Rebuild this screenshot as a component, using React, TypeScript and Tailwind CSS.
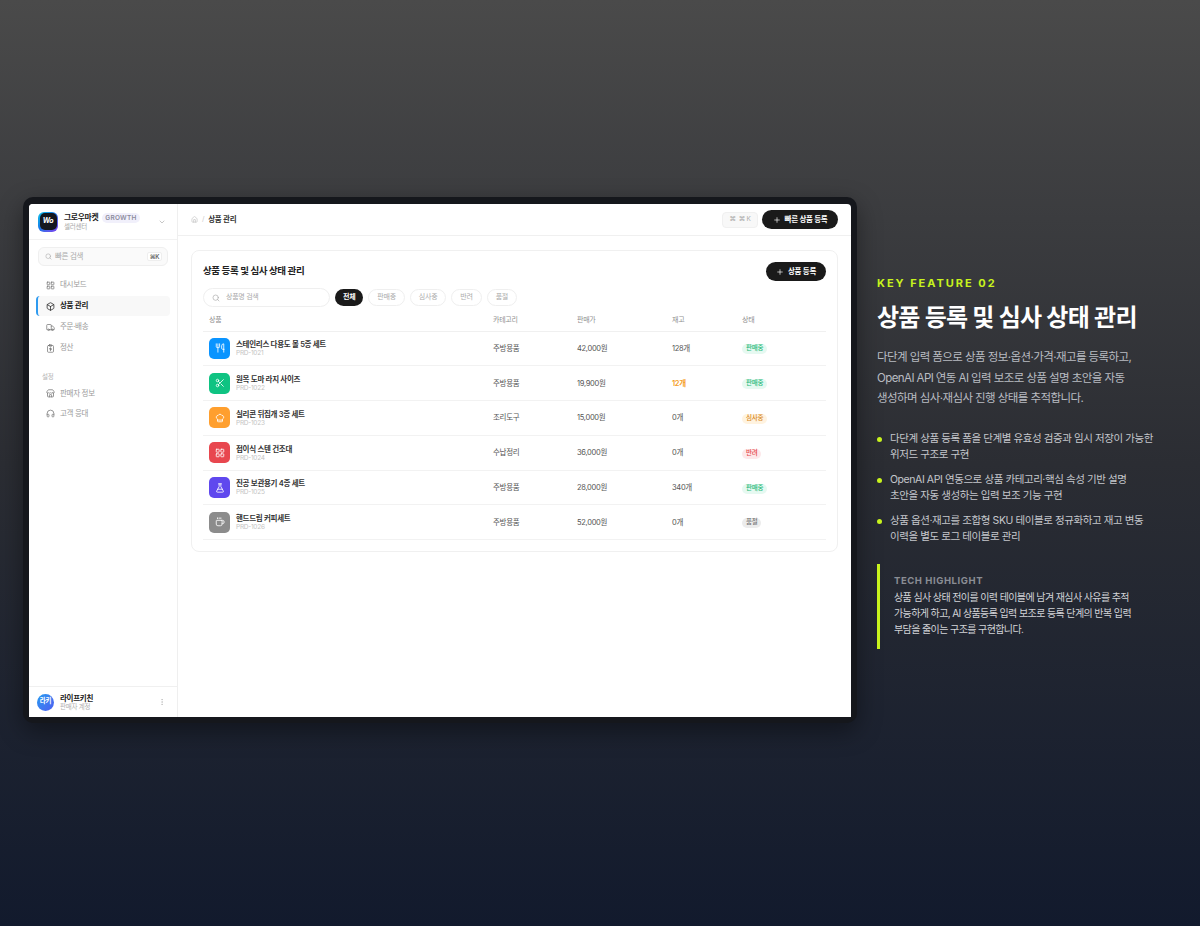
import { Box, ChefHat, ChevronDown, Coffee, FlaskConical, Headphones, House, LayoutGrid, MoreVertical, Plus, Scissors, Search, Store, Truck, Utensils } from "lucide-react";
import type { ComponentType } from "react";

type Icon = ComponentType<{ className?: string; strokeWidth?: number }>;

// 정산 icon: clipboard with a won mark, lucide has nothing close
function SettleIcon({ className }: { className?: string }) {
  return (
    <svg viewBox="0 0 24 24" fill="none" stroke="currentColor" strokeWidth={2} strokeLinecap="round" strokeLinejoin="round" className={className}>
      <rect x="4" y="4" width="16" height="18" rx="2.5" />
      <rect x="8.5" y="2" width="7" height="4" rx="1" />
      <path d="M12 10v8M9.5 12h4a1.5 1.5 0 0 1 0 3h-3" />
    </svg>
  );
}

const navMain: { label: string; icon: Icon; active?: boolean }[] = [
  { label: "대시보드", icon: LayoutGrid },
  { label: "상품 관리", icon: Box, active: true },
  { label: "주문·배송", icon: Truck },
  { label: "정산", icon: SettleIcon },
];

const navSub: { label: string; icon: Icon }[] = [
  { label: "판매자 정보", icon: Store },
  { label: "고객 응대", icon: Headphones },
];

const filters = ["전체", "판매중", "심사중", "반려", "품절"];

const statusStyle: Record<string, string> = {
  판매중: "bg-[#e6f9f1] text-[#1fb97a]",
  심사중: "bg-[#fff3e0] text-[#d98a1f]",
  반려: "bg-[#fde8ea] text-[#e5484d]",
  품절: "bg-[#ececec] text-[#777777]",
};

const rows: { name: string; code: string; cat: string; price: string; stock: string; low?: boolean; status: string; icon: Icon; color: string }[] = [
  { name: "스테인리스 다용도 볼 5종 세트", code: "PRD-1021", cat: "주방용품", price: "42,000원", stock: "128개", status: "판매중", icon: Utensils, color: "bg-[#0a94ff]" },
  { name: "원목 도마 라지 사이즈", code: "PRD-1022", cat: "주방용품", price: "19,900원", stock: "12개", low: true, status: "판매중", icon: Scissors, color: "bg-[#0fc382]" },
  { name: "실리콘 뒤집개 3종 세트", code: "PRD-1023", cat: "조리도구", price: "15,000원", stock: "0개", status: "심사중", icon: ChefHat, color: "bg-[#ff9f2e]" },
  { name: "접이식 스텐 건조대", code: "PRD-1024", cat: "수납정리", price: "36,000원", stock: "0개", status: "반려", icon: LayoutGrid, color: "bg-[#e8474f]" },
  { name: "진공 보관용기 4종 세트", code: "PRD-1025", cat: "주방용품", price: "28,000원", stock: "340개", status: "판매중", icon: FlaskConical, color: "bg-[#5f48ee]" },
  { name: "핸드드립 커피세트", code: "PRD-1026", cat: "주방용품", price: "52,000원", stock: "0개", status: "품절", icon: Coffee, color: "bg-[#8c8c8c]" },
];

const bullets = [
  ["다단계 상품 등록 폼을 단계별 유효성 검증과 임시 저장이 가능한", "위저드 구조로 구현"],
  ["OpenAI API 연동으로 상품 카테고리·핵심 속성 기반 설명", "초안을 자동 생성하는 입력 보조 기능 구현"],
  ["상품 옵션·재고를 조합형 SKU 테이블로 정규화하고 재고 변동", "이력을 별도 로그 테이블로 관리"],
];

function Sidebar() {
  return (
    <aside className="w-[149px] shrink-0 flex flex-col border-r border-[#efefef] bg-white">
      <div className="h-[36px] flex items-center pl-[9px] pr-[11px] border-b border-[#f2f2f2]">
        <div className="w-[20px] h-[20px] rounded-[6px] bg-gradient-to-br from-[#19c3e6] via-[#1d6fe8] to-[#7a3cf0] p-[1.5px] shrink-0">
          <div className="w-full h-full rounded-[5px] bg-[#14171f] flex items-center justify-center text-white text-[7px] font-bold italic">Wo</div>
        </div>
        <div className="ml-[6px] leading-none pt-[1px]">
          <div className="flex items-center gap-[4px]">
            <span className="text-[7.8px] font-bold text-[#222222]">그로우마켓</span>
            <span className="px-[3px] h-[10px] flex items-center rounded-full bg-[#f1f0fb] text-[#8b8b9c] text-[6.5px] font-semibold !tracking-[0.04em]">GROWTH</span>
          </div>
          <div className="text-[6.5px] text-[#a8a8a8] mt-[1px]">셀러센터</div>
        </div>
        <ChevronDown className="w-[8px] h-[8px] ml-auto text-[#aaaaaa]" />
      </div>
      <div className="px-[9px] pt-[7px]">
        <div className="h-[19px] rounded-[6px] bg-[#fafafa] border border-[#efefef] flex items-center pl-[6px] pr-[5px] text-[#aaaaaa]">
          <Search className="w-[7px] h-[7px]" />
          <span className="ml-[3px] text-[7.5px]">빠른 검색</span>
          <span className="ml-auto w-[15px] h-[9px] flex items-center justify-center rounded-[2px] bg-white border border-[#eeeeee] text-[6px] font-semibold text-[#666666]">⌘K</span>
        </div>
      </div>
      <nav className="px-[7px] pt-[9px] flex flex-col gap-[1px]">
        {navMain.map((n) => (
          <div key={n.label} className={`h-[20px] flex items-center pl-[8px] rounded-[4px] border-l-2 ${n.active ? "border-[#2f9bf0] bg-[#f8f8f8] text-[#222222] font-semibold" : "border-transparent text-[#9a9a9a]"}`}>
            <n.icon className={`w-[9px] h-[9px] ${n.active ? "text-[#222222]" : "text-[#777777]"}`} />
            <span className="ml-[5px] text-[7.5px]">{n.label}</span>
          </div>
        ))}
      </nav>
      <div className="pl-[13px] pt-[15px] text-[6.5px] text-[#b5b5b5]">설정</div>
      <nav className="px-[7px] pt-[1px] flex flex-col">
        {navSub.map((n) => (
          <div key={n.label} className="h-[20px] flex items-center pl-[10px] text-[#9a9a9a]">
            <n.icon className="w-[9px] h-[9px] text-[#777777]" />
            <span className="ml-[5px] text-[7.5px]">{n.label}</span>
          </div>
        ))}
      </nav>
      <div className="mt-auto h-[31px] flex items-center pl-[8px] pr-[11px] border-t border-[#f0f0f0]">
        <div className="w-[17px] h-[17px] rounded-full bg-gradient-to-br from-[#1f9af0] to-[#4a5cf0] flex items-center justify-center text-white text-[6.5px] font-bold">라키</div>
        <div className="ml-[6px] leading-none pt-[1px]">
          <div className="text-[7.5px] font-bold text-[#222222]">라이프키친</div>
          <div className="text-[6.5px] text-[#b0b0b0] mt-[1px]">판매자 계정</div>
        </div>
        <MoreVertical className="w-[8px] h-[8px] ml-auto text-[#bbbbbb]" />
      </div>
    </aside>
  );
}

function ProductCard() {
  return (
    <section className="mx-[13px] mt-[14px] border border-[#f0f0f0] rounded-[8px] px-[11px] pt-[11px] pb-[11px]">
      <div className="flex items-center justify-between h-[19px]">
        <h2 className="text-[9.5px] font-bold text-[#222222]">상품 등록 및 심사 상태 관리</h2>
        <button className="h-[19px] w-[60px] rounded-full bg-[#1a1a1a] text-white text-[7.5px] font-semibold flex items-center justify-center gap-[4px]">
          <Plus className="w-[8px] h-[8px]" />상품 등록
        </button>
      </div>
      <div className="flex items-center mt-[7px] h-[19px]">
        <div className="w-[127px] h-[19px] border border-[#efefef] rounded-full flex items-center pl-[8px] text-[#aaaaaa]">
          <Search className="w-[8px] h-[8px]" />
          <span className="ml-[6px] text-[7px]">상품명 검색</span>
        </div>
        <div className="flex ml-[5px] gap-[5px]">
          {filters.map((f, i) => (
            <span key={f} className={`h-[17px] px-[8px] rounded-full flex items-center text-[7px] ${i === 0 ? "bg-[#1a1a1a] text-white font-semibold" : "border border-[#efefef] text-[#aaaaaa]"}`}>{f}</span>
          ))}
        </div>
      </div>
      <table className="w-full mt-[2px] table-fixed text-left">
        <colgroup>
          <col className="w-[290px]" />
          <col className="w-[84px]" />
          <col className="w-[95px]" />
          <col className="w-[70px]" />
          <col />
        </colgroup>
        <thead>
          <tr className="h-[22px] border-b border-[#f0f0f0] text-[7px] text-[#8f8f8f]">
            {["상품", "카테고리", "판매가", "재고", "상태"].map((h, i) => (
              <th key={h} className={`font-normal ${i === 0 ? "pl-[6px]" : ""}`}>{h}</th>
            ))}
          </tr>
        </thead>
        <tbody>
          {rows.map((r) => (
            <tr key={r.code} className="h-[34.8px] border-b border-[#f2f2f2] text-[7.5px] text-[#555555]">
              <td className="pl-[6px]">
                <div className="flex items-center">
                  <div className={`w-[21px] h-[21px] rounded-[5px] flex items-center justify-center text-white ${r.color}`}>
                    <r.icon className="w-[10px] h-[10px]" />
                  </div>
                  <div className="ml-[6px] leading-none pt-[1px]">
                    <div className="text-[7.5px] font-semibold text-[#333333]">{r.name}</div>
                    <div className="text-[6.5px] text-[#c4c4c4] mt-[1.5px]">{r.code}</div>
                  </div>
                </div>
              </td>
              <td>{r.cat}</td>
              <td>{r.price}</td>
              <td className={r.low ? "text-[#f59f2a] font-semibold" : ""}>{r.stock}</td>
              <td>
                <span className={`inline-flex items-center h-[10px] px-[4px] rounded-full text-[6.5px] font-medium ${statusStyle[r.status]}`}>{r.status}</span>
              </td>
            </tr>
          ))}
        </tbody>
      </table>
    </section>
  );
}

function Mockup() {
  return (
    <div className="w-[834px] h-[526px] shrink-0 bg-[#15171c] rounded-[10px] px-[6px] pt-[7px] pb-[6px] shadow-[0_8px_24px_rgba(0,0,0,0.4)] [&_*]:tracking-[-0.04em]">
      <div className="h-full bg-white rounded-tl-[4px] rounded-tr-[4px] flex overflow-hidden">
        <Sidebar />
        <main className="flex-1 min-w-0 flex flex-col">
          <header className="h-[32px] flex items-center pl-[13px] pr-[13px] border-b border-[#f0f0f0]">
            <House className="w-[7px] h-[7px] text-[#bbbbbb]" />
            <span className="mx-[4px] text-[7px] text-[#cccccc]">/</span>
            <span className="text-[7.5px] font-semibold text-[#333333]">상품 관리</span>
            <span className="ml-auto h-[16px] w-[36px] rounded-[4px] bg-[#f8f8f8] border border-[#f0f0f0] flex items-center justify-center gap-[3px] text-[6.5px] text-[#aaaaaa]">⌘ <span>⌘ K</span></span>
            <button className="ml-[4px] h-[19px] w-[76px] rounded-full bg-[#1a1a1a] text-white text-[7.5px] font-semibold flex items-center justify-center gap-[4px]">
              <Plus className="w-[8px] h-[8px]" />빠른 상품 등록
            </button>
          </header>
          <ProductCard />
        </main>
      </div>
    </div>
  );
}

function FeatureText() {
  return (
    <div className="ml-[20px] pt-[80px] w-[290px] text-[#d0d2d6]">
      <div className="text-[11px] font-bold tracking-[0.18em] text-[#c8f31d] leading-[13px]">KEY FEATURE 02</div>
      <h1 className="mt-[11px] text-[24px] font-bold tracking-[-0.03em] leading-[34px] text-white whitespace-nowrap">상품 등록 및 심사 상태 관리</h1>
      <p className="mt-[12px] text-[11.5px] tracking-[-0.05em] leading-[20.5px] text-[#b9bcc2] whitespace-nowrap">
        다단계 입력 폼으로 상품 정보·옵션·가격·재고를 등록하고,<br />
        OpenAI API 연동 AI 입력 보조로 상품 설명 초안을 자동<br />
        생성하며 심사·재심사 진행 상태를 추적합니다.
      </p>
      <ul className="mt-[22px] flex flex-col gap-[8px]">
        {bullets.map((b) => (
          <li key={b[0]} className="flex">
            <span className="w-[5px] h-[5px] mt-[6px] shrink-0 rounded-full bg-[#c8f31d]" />
            <span className="ml-[8px] text-[10.5px] tracking-[-0.04em] leading-[16.5px] text-[#c5c7cc] whitespace-nowrap">{b[0]}<br />{b[1]}</span>
          </li>
        ))}
      </ul>
      <div className="mt-[18px] h-[85px] border-l-[3px] border-[#c8f31d] pl-[14px] pt-[10px]">
        <div className="text-[9.5px] font-bold tracking-[0.06em] text-[#8a8d94] leading-[13px]">TECH HIGHLIGHT</div>
        <p className="mt-[3.5px] text-[10px] tracking-[-0.06em] leading-[15.8px] text-[#d2d4d8] whitespace-nowrap">
          상품 심사 상태 전이를 이력 테이블에 남겨 재심사 사유를 추적<br />
          가능하게 하고, AI 상품등록 입력 보조로 등록 단계의 반복 입력<br />
          부담을 줄이는 구조를 구현합니다.
        </p>
      </div>
    </div>
  );
}

export default function App() {
  return (
    <div className="w-[1200px] h-[926px] overflow-hidden flex items-start pl-[23px] pt-[197px] bg-gradient-to-b from-[#4a4a4a] via-[#2b2d33] to-[#121a2d] font-['Inter','Noto_Sans_CJK_KR',sans-serif]">
      <Mockup />
      <FeatureText />
    </div>
  );
}
